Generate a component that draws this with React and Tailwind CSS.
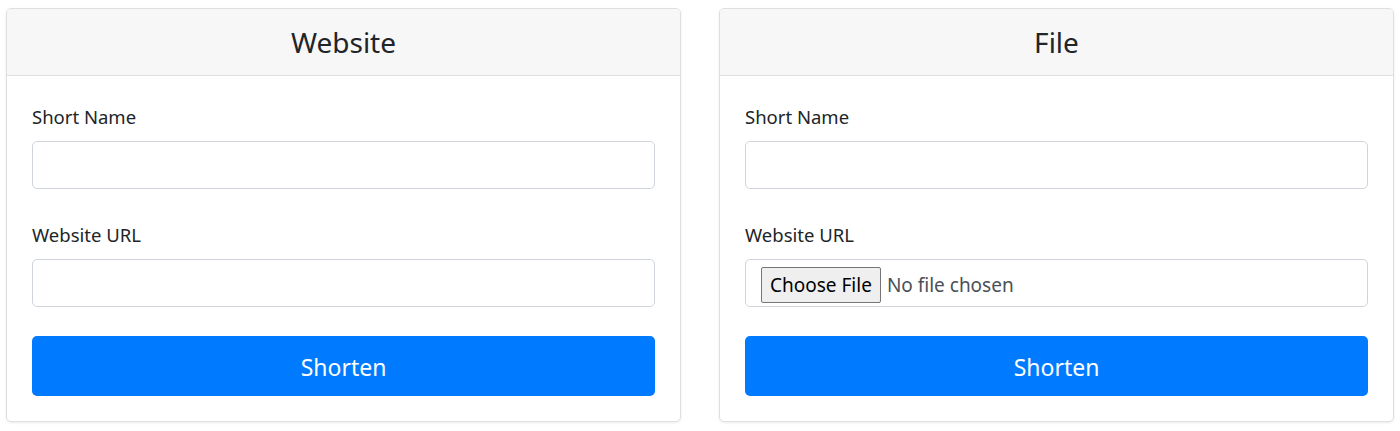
export default function App() {
  return (
    <div className="min-h-screen bg-white px-[6px] pt-[8px] text-[#212529]" style={{ fontFamily: '"Noto Sans", "Open Sans", sans-serif' }}>
      <div className="flex gap-[38px]">
        <Card title="Website">
          <Field label="Short Name">
            <input className="block h-[48px] w-full rounded-[5px] border border-[#ced4da] px-4 text-xl outline-none" />
          </Field>
          <Field label="Website URL" last>
            <input className="block h-[48px] w-full rounded-[5px] border border-[#ced4da] px-4 text-xl outline-none" />
          </Field>
          <ShortenBtn />
        </Card>
        <Card title="File">
          <Field label="Short Name">
            <input className="block h-[48px] w-full rounded-[5px] border border-[#ced4da] px-4 text-xl outline-none" />
          </Field>
          <Field label="Website URL" last>
            <div className="flex h-[48px] w-full items-start rounded-[5px] border border-[#ced4da] pl-[15px] pt-[7px]">
              <span className="flex h-[36px] items-center rounded-[2px] border border-[#767676] bg-[#efefef] px-[8px] pt-[1px] text-[19px] text-black">
                Choose File
              </span>
              <span className="ml-[6px] flex h-[36px] items-center pt-[1px] text-[19px] text-[#495057]">No file chosen</span>
            </div>
          </Field>
          <ShortenBtn />
        </Card>
      </div>
    </div>
  )
}

function Card({ title, children }) {
  return (
    <div className="flex-1 overflow-hidden rounded-[5px] border border-[#dfdfdf] shadow-[0_1px_3px_rgba(0,0,0,0.08)]">
      <div className="flex h-[67px] items-center justify-center border-b border-[#dfdfdf] bg-[#f7f7f7]">
        <h3 className="text-[28px] leading-none">{title}</h3>
      </div>
      <div className="px-[25px] pt-[29px] pb-[25px]">{children}</div>
    </div>
  )
}

function Field({ label, last, children }) {
  return (
    <div className={last ? 'mb-[29px]' : 'mb-[34px]'}>
      <label className="mb-[12px] block text-[18.5px] leading-6">{label}</label>
      {children}
    </div>
  )
}

function ShortenBtn() {
  return (
    <button className="block h-[60px] w-full rounded-[5px] bg-[#007bff] pt-[2px] text-[23px] text-white">
      Shorten
    </button>
  )
}
